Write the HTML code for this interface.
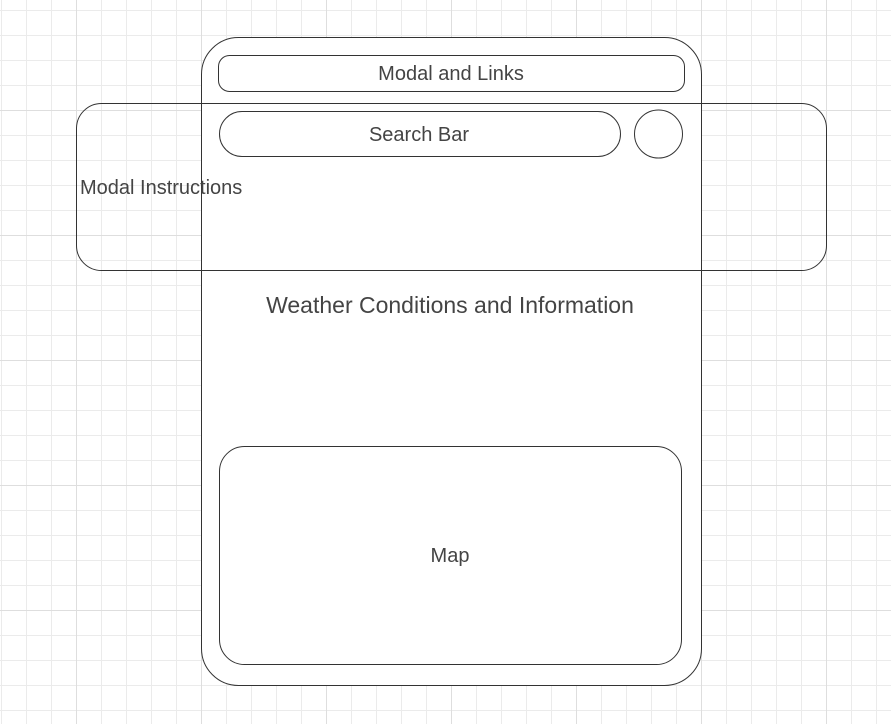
<!DOCTYPE html>
<html><head><meta charset="utf-8"><style>
html,body{margin:0;padding:0;background:#fff}
svg{display:block}
text{font-family:"Liberation Sans",sans-serif;fill:#444}
</style></head><body>
<svg width="891" height="724" viewBox="0 0 891 724" xmlns="http://www.w3.org/2000/svg">
<defs>
<pattern id="g" x="1" y="10" width="25" height="25" patternUnits="userSpaceOnUse">
<path d="M0.5 0V25M0 0.5H25" stroke="#ebebeb" stroke-width="1" fill="none"/>
</pattern>
<pattern id="G" x="76" y="110" width="125" height="125" patternUnits="userSpaceOnUse">
<path d="M0.5 0V125M0 0.5H125" stroke="#dedede" stroke-width="1" fill="none"/>
</pattern>
</defs>
<rect width="891" height="724" fill="url(#g)"/>
<rect width="891" height="724" fill="url(#G)"/>
<rect x="201.5" y="37.5" width="500" height="648" rx="37" fill="#fff" stroke="#333"/>
<rect x="218.5" y="55.5" width="466" height="36" rx="11" fill="#fff" stroke="#333"/>
<text x="451" y="80" font-size="20" text-anchor="middle">Modal and Links</text>
<rect x="219.5" y="111.5" width="401" height="45" rx="22.5" fill="#fff" stroke="#333"/>
<text x="419" y="141" font-size="20" text-anchor="middle">Search Bar</text>
<circle cx="658.5" cy="134" r="24" fill="#fff" stroke="#333"/>
<rect x="76.5" y="103.5" width="750" height="167" rx="25" fill="none" stroke="#333"/>
<text x="80" y="194" font-size="20">Modal Instructions</text>
<text x="450" y="313" font-size="23" text-anchor="middle">Weather Conditions and Information</text>
<rect x="219.5" y="446.5" width="462" height="218" rx="25" fill="#fff" stroke="#333"/>
<text x="450" y="562" font-size="20" text-anchor="middle">Map</text>
</svg>
</body></html>
